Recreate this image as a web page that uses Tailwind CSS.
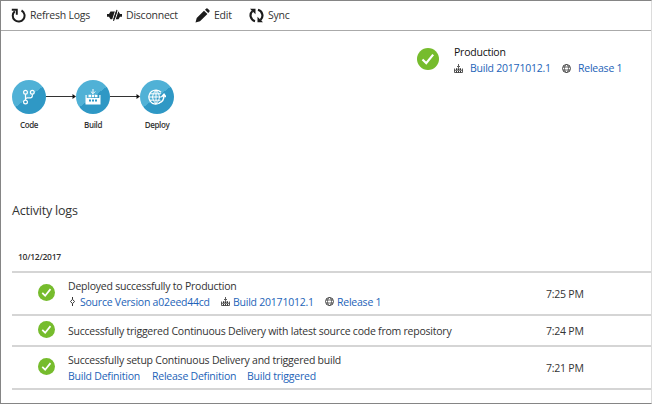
<!DOCTYPE html>
<html lang="en">
<head>
  <meta charset="UTF-8">
  <meta name="viewport" content="width=device-width, initial-scale=1.0">
  <title>Continuous Delivery</title>
  <script src="https://cdn.jsdelivr.net/npm/@tailwindcss/browser@4"></script>
</head>
<body class="bg-white font-['Open_Sans','Noto_Sans',sans-serif] text-[10.5px] leading-4 tracking-[-0.23px] whitespace-nowrap text-[#333]">
  <!-- Shared icons -->
  <svg class="hidden">
    <symbol id="check" viewBox="0 0 20 20">
      <circle cx="10" cy="10" r="10" fill="#76bc2d"/>
      <path d="M5 10.500l3.400 3.300L14.700 6" fill="none" stroke="#fff" stroke-width="2"/>
    </symbol>
    <symbol id="build" viewBox="0 0 18 18">
      <path d="M1 9v8h16V9M1 12.500h16" fill="none" stroke="currentColor" stroke-width="1.600"/>
      <path d="M9 0v7M6 4l3 3 3-3" fill="none" stroke="currentColor" stroke-width="1.600"/>
      <path d="M4 8.500h2.500V12H4zM7.800 8.500h2.500V12H7.800zM11.500 8.500H14V12h-2.500zM4 14h2v3H4zM8 14h2v3H8zM12 14h2v3h-2z" fill="currentColor"/>
    </symbol>
    <symbol id="globe" viewBox="0 0 18 18">
      <g fill="none" stroke="currentColor" stroke-width="1.400">
        <circle cx="9" cy="9" r="8" stroke-width="1.800"/>
        <ellipse cx="9" cy="9" rx="4" ry="8"/>
        <path d="M2 6h14M2 12h14"/>
      </g>
    </symbol>
  </svg>

  <div class="flex h-[404px] w-[652px] flex-col overflow-hidden border border-[#858585] border-r-[#dcdcdc]">
    <!-- Toolbar -->
    <div class="flex h-[30px] shrink-0 items-center border-b border-[#aaa] pb-px pl-[10px]">
      <div class="flex w-[96px] items-center gap-[4px]">
        <svg class="size-[15px]" viewBox="0 0 15 15" fill="none" stroke="#1c1c1c" stroke-width="2"><path d="M3.800 3.200A5.900 5.900 0 1 0 10.500 2.500"/><path d="M.8 1.700h5v5" stroke-width="1.900"/></svg>
        <span>Refresh Logs</span>
      </div>
      <div class="flex w-[88px] items-center gap-[4px]">
        <svg class="h-[15px] w-[15px]" viewBox="0 0 15 15"><path d="M0 6h2l1.500-2.500h8L13 6h2v2.800h-2l-1.500 2.500h-8L2 8.800H0z" fill="#1c1c1c"/><path d="M8.800 2L5.300 12.500M11.300 2L7.800 12.500" stroke="#fff" stroke-width="1"/><path d="M10 1.800L6.500 12.800" stroke="#1c1c1c" stroke-width="1.100"/></svg>
        <span>Disconnect</span>
      </div>
      <div class="flex w-[54px] items-center gap-[4px]">
        <svg class="size-[15px]" viewBox="0 0 15 15" fill="#1c1c1c"><path d="M.5 14.500l1.200-4.500L9 2.700l3.400 3.400L5 13.300zM10 1.800L11.300.6q.8-.5 1.500.1l1.600 1.600q.6.7 0 1.400l-1.200 1.300z"/></svg>
        <span>Edit</span>
      </div>
      <div class="flex items-center gap-[4px]">
        <svg class="size-[15px]" viewBox="0 0 15 15"><path d="M6 13.200A6 6 0 0 1 3.500 3M9 1.800A6 6 0 0 1 11.500 12" fill="none" stroke="#1c1c1c" stroke-width="2.200"/><path d="M1 .8h5.500v5.500zM14 14.200H8.500V8.700z" fill="#1c1c1c"/></svg>
        <span>Sync</span>
      </div>
    </div>

    <!-- Pipeline and current environment -->
    <div class="flex h-[171px] shrink-0">
      <div class="flex w-[405px] pl-[11px] pt-[49px] text-[8px] font-semibold leading-3 tracking-[-0.36px]">
        <div class="flex w-[34px] flex-col items-center gap-[5px]">
          <div class="flex size-[34px] items-center justify-center rounded-full bg-linear-[143deg] from-[#50b1d6] from-50% to-[#2f98c5] to-50%">
            <svg class="size-4" viewBox="0 0 16 16" fill="none" stroke="#fff" stroke-width="1.200"><circle cx="4.500" cy="3.300" r="1.900"/><circle cx="11.300" cy="3.300" r="1.900"/><circle cx="4.500" cy="13" r="1.900"/><path d="M4.500 5.200v5.900M11.300 5.200v1.600q0 2-2 2H6.500q-2 0-2 2"/></svg>
          </div>
          <span>Code</span>
        </div>
        <svg class="mt-[12px] h-[10px] w-[30px]" viewBox="0 0 30 10"><path d="M0 4.500h27" stroke="#333"/><path d="M26.500 2L30 4.500 26.500 7z" fill="#111"/></svg>
        <div class="flex w-[34px] flex-col items-center gap-[5px]">
          <div class="flex size-[34px] items-center justify-center rounded-full bg-linear-[143deg] from-[#50b1d6] from-50% to-[#2f98c5] to-50%">
            <svg class="size-4" viewBox="0 0 16 16"><path d="M.5 6h1.200v3h12.600V6h1.200v9.500H.5zM3.500 5.800H6v2.500H3.500zM6.800 5.800h2.500v2.500H6.800zM10 5.800h2.500v2.500H10z" fill="#fff"/><path d="M8 0v4.500M5.800 2.500L8 4.700l2.200-2.200" fill="none" stroke="#fff"/><path d="M4 10.500h2v2H4zM7 10.500h2v2H7zM10 10.500h2v2h-2z" fill="#2f98c5"/></svg>
          </div>
          <span>Build</span>
        </div>
        <svg class="mt-[12px] h-[10px] w-[30px]" viewBox="0 0 30 10"><path d="M0 4.500h27" stroke="#333"/><path d="M26.500 2L30 4.500 26.500 7z" fill="#111"/></svg>
        <div class="flex w-[34px] flex-col items-center gap-[5px]">
          <div class="flex size-[34px] items-center justify-center rounded-full bg-linear-[143deg] from-[#50b1d6] from-50% to-[#2f98c5] to-50%">
            <svg class="h-4 w-[18px]" viewBox="0 0 18 16" fill="none" stroke="#fff" stroke-width="1"><path d="M13 3.300A7 7 0 1 0 11.500 14" stroke-width="1.300"/><path d="M8 1v14M1 8h12.500M2 4.800h11M2 11.200h10.500M8 1q-7 7 0 14M8 1q7 7 0 14"/><path d="M11 14q5-1.500 5-7.500M13.500 8L16 5.200 18 8" stroke-width="1.500"/></svg>
          </div>
          <span>Deploy</span>
        </div>
      </div>
      <div class="flex gap-[15px] pl-[11px] pt-[13px]">
        <svg class="mt-[4px] size-[22px]"><use href="#check"/></svg>
        <div>
          <div class="font-medium text-[#111]">Production</div>
          <div class="flex items-center text-[#1d63b8]">
            <svg class="mr-[7px] size-[9px] text-[#333]"><use href="#build"/></svg>
            <span class="w-[92px]">Build 20171012.1</span>
            <svg class="mr-[7px] size-[9px] text-[#333]"><use href="#globe"/></svg>
            <span>Release 1</span>
          </div>
        </div>
      </div>
    </div>

    <!-- Activity logs -->
    <div class="pl-[11px]">
      <h2 class="pt-px text-[12.5px] leading-4 tracking-[-0.2px]">Activity logs</h2>
      <div class="mt-[30px] h-[24px] border-b-2 border-[#d5d5d5] pl-[6px] text-[8.5px] font-semibold leading-4 tracking-[-0.27px]">10/12/2017</div>

      <div class="flex h-[43px] items-center border-b-2 border-[#d5d5d5] pl-[26px]">
        <svg class="mb-[2px] size-[17px]"><use href="#check"/></svg>
        <div class="ml-[13px] w-[478px]">
          <div>Deployed successfully to Production</div>
          <div class="flex items-center text-[#1d63b8]">
            <svg class="mr-[3px] h-[9px] w-[9px]" viewBox="0 0 9 9" fill="none" stroke="#333"><path d="M4.500 0v2M4.500 7v2M4.500 2.300L6.500 4.500l-2 2.200-2-2.200z"/></svg>
            <span class="w-[141px]">Source Version a02eed44cd</span>
            <svg class="mr-[3px] size-[9px] text-[#333]"><use href="#build"/></svg>
            <span class="w-[92px]">Build 20171012.1</span>
            <svg class="mr-[3px] size-[9px] text-[#333]"><use href="#globe"/></svg>
            <span>Release 1</span>
          </div>
        </div>
        <div>7:25 PM</div>
      </div>

      <div class="flex h-[31px] items-center border-b-2 border-[#d5d5d5] pl-[26px]">
        <svg class="mb-[3px] size-[17px]"><use href="#check"/></svg>
        <div class="ml-[13px] w-[478px]">Successfully triggered Continuous Delivery with latest source code from repository</div>
        <div>7:24 PM</div>
      </div>

      <div class="flex h-[43px] items-center border-b-2 border-[#d5d5d5] pl-[26px]">
        <svg class="mb-[2px] size-[17px]"><use href="#check"/></svg>
        <div class="ml-[13px] w-[478px]">
          <div>Successfully setup Continuous Delivery and triggered build</div>
          <div class="flex text-[#1d63b8]">
            <span class="w-[84px]">Build Definition</span>
            <span class="w-[95px]">Release Definition</span>
            <span>Build triggered</span>
          </div>
        </div>
        <div>7:21 PM</div>
      </div>
    </div>
  </div>
</body>
</html>
